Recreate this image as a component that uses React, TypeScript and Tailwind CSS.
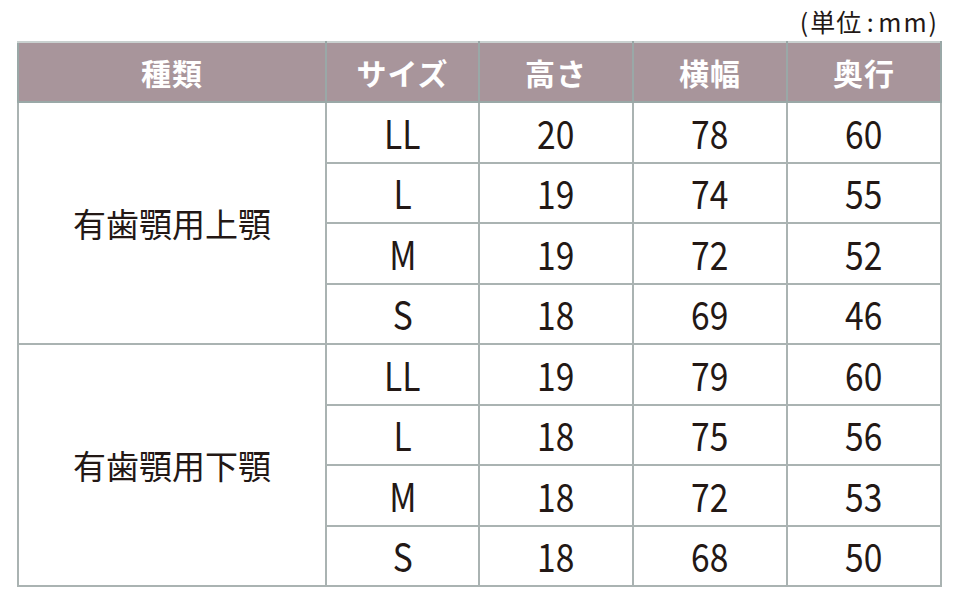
import React from "react";

const groups = [
  {
    name: "有歯顎用上顎",
    rows: [
      ["LL", "20", "78", "60"],
      ["L", "19", "74", "55"],
      ["M", "19", "72", "52"],
      ["S", "18", "69", "46"],
    ],
  },
  {
    name: "有歯顎用下顎",
    rows: [
      ["LL", "19", "79", "60"],
      ["L", "18", "75", "56"],
      ["M", "18", "72", "53"],
      ["S", "18", "68", "50"],
    ],
  },
];

const headers = ["種類", "サイズ", "高さ", "横幅", "奥行"];

export default function App() {
  return (
    <div
      className="w-[959px] h-[603px] bg-white text-[#231815]"
      style={{ fontFamily: '"Noto Sans CJK JP", "Noto Sans", sans-serif' }}
    >
      <div className="h-[41px] flex items-start justify-end pr-[22px] pt-[3px]">
        <span className="text-[25px] leading-[36px] flex items-center">
          <span>(</span>
          <span className="tracking-[1px] ml-[2px]">単位</span>
          <span className="w-[16px] text-center">:</span>
          <span className="tracking-[2px]">mm</span>
          <span>)</span>
        </span>
      </div>
      <div className="pl-[17px]">
        <table className="border-collapse table-fixed w-[923px]">
          <colgroup>
            <col className="w-[308px]" />
            <col className="w-[153px]" />
            <col className="w-[154px]" />
            <col className="w-[154px]" />
            <col className="w-[154px]" />
          </colgroup>
          <thead>
            <tr className="h-[60px] bg-[#a8959b]">
              {headers.map((h) => (
                <th
                  key={h}
                  className="border-2 border-[#9aa8a7] border-t-[#c9d0cf] text-white font-bold text-[30px] tracking-[1px] p-0 text-center align-middle"
                >
                  {h}
                </th>
              ))}
            </tr>
          </thead>
          <tbody>
            {groups.map((g) =>
              g.rows.map((r, i) => (
                <tr key={g.name + i} className="h-[60.5px]">
                  {i === 0 && (
                    <td
                      rowSpan={4}
                      className="border-2 border-[#aab3b2] text-center align-middle text-[33px] p-0 pt-[2px]"
                    >
                      {g.name}
                    </td>
                  )}
                  {r.map((c, j) => (
                    <td
                      key={j}
                      className="border-2 border-[#aab3b2] text-center align-middle p-0 pt-[1px]"
                    >
                      <span className="inline-block text-[39px] leading-[40px] scale-x-[0.86]">{c}</span>
                    </td>
                  ))}
                </tr>
              ))
            )}
          </tbody>
        </table>
      </div>
    </div>
  );
}
